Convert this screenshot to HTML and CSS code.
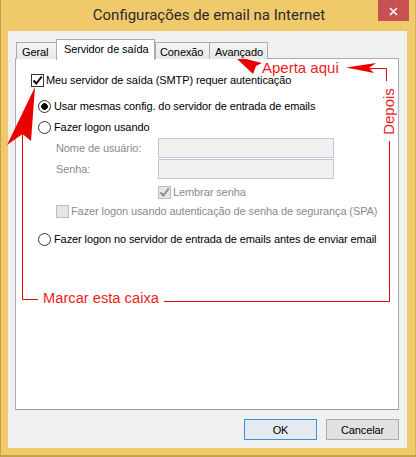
FILE: index.html
```html
<!DOCTYPE html>
<html lang="pt-BR">
<head>
<meta charset="utf-8">
<title>Configurações de email na Internet</title>
<link rel="stylesheet" href="styles.css">
</head>
<body>
<div class="window">
  <div class="titlebar">
    <span class="title">Configurações de email na Internet</span>
    <span class="close" aria-label="Fechar">
      <svg width="9" height="9" viewBox="0 0 9 9"><path d="M1 1 L8 8 M8 1 L1 8" stroke="#fff" stroke-width="1.6"/></svg>
    </span>
  </div>

  <div class="client">
    <div class="tabs">
      <span class="tab tab-geral">Geral</span>
      <span class="tab tab-active">Servidor de saída</span>
      <span class="tab tab-conexao">Conexão</span>
      <span class="tab tab-avancado">Avançado</span>
    </div>

    <div class="panel">
      <label class="row row-auth">
        <span class="check checked">
          <svg width="11" height="11" viewBox="0 0 11 11"><path d="M1.5 5.5 L4.3 8.5 L9.8 1.5" fill="none" stroke="#000" stroke-width="2"/></svg>
        </span>
        <span class="txt">Meu servidor de saída (SMTP) requer autenticação</span>
      </label>

      <label class="row row-same">
        <span class="radio selected"></span>
        <span class="txt">Usar mesmas config. do servidor de entrada de emails</span>
      </label>

      <label class="row row-logon">
        <span class="radio"></span>
        <span class="txt">Fazer logon usando</span>
      </label>

      <div class="field field-user">
        <span class="lbl">Nome de usuário:</span>
        <span class="input"></span>
      </div>
      <div class="field field-pass">
        <span class="lbl">Senha:</span>
        <span class="input"></span>
      </div>

      <label class="row row-remember">
        <span class="check disabled">
          <svg width="11" height="11" viewBox="0 0 11 11"><path d="M1.5 5.5 L4.3 8.5 L9.8 1.5" fill="none" stroke="#8c8c8c" stroke-width="2"/></svg>
        </span>
        <span class="txt dim">Lembrar senha</span>
      </label>

      <label class="row row-spa">
        <span class="check disabled"></span>
        <span class="txt dim">Fazer logon usando autenticação de senha de segurança (SPA)</span>
      </label>

      <label class="row row-before">
        <span class="radio"></span>
        <span class="txt">Fazer logon no servidor de entrada de emails antes de enviar email</span>
      </label>
    </div>

    <div class="buttons">
      <span class="btn btn-default">OK</span>
      <span class="btn">Cancelar</span>
    </div>
  </div>

  <!-- red hand-drawn hints laid over the dialog -->
  <svg class="marks" width="416" height="457" viewBox="0 0 416 457">
    <g fill="#ea0000">
      <polygon points="35,87 31,141 22.5,134 7,145"/>
      <polygon points="234,56 262,63 256,66 253,74"/>
      <polygon points="346,67.5 376,63 369,68 374,73"/>
    </g>
    <g fill="none" stroke="#ea0000" stroke-width="1">
      <polyline points="22.5,134 22.5,299.5 38,299.5"/>
      <polyline points="164,301.5 389.5,301.5 389.5,141"/>
      <polyline points="369,68.5 386.5,68.5 386.5,81"/>
    </g>
  </svg>
  <span class="note note-aperta">Aperta aqui</span>
  <span class="note note-marcar">Marcar esta caixa</span>
  <span class="note note-depois">Depois</span>
</div>
</body>
</html>
```

FILE: styles.css
```css
* { box-sizing: border-box; }

html, body {
  margin: 0;
  padding: 0;
  background: #fff;
}

.window {
  position: relative;
  width: 416px;
  height: 457px;
  background: #f0c96b;
  box-shadow: inset 1px 0 0 #c9a04a, inset 0 -2px 0 #c9a04a, inset -1px 0 0 #d8b25c;
  font-family: "Liberation Sans", Arial, sans-serif;
  font-size: 11px;
  letter-spacing: -0.1px;
  color: #000;
  overflow: hidden;
}

/* title bar */
.titlebar {
  position: relative;
  height: 31px;
  display: flex;
  justify-content: center;
}

.title {
  font-family: Roboto, "Liberation Sans", sans-serif;
  font-size: 15px;
  letter-spacing: 0;
  line-height: 30px;
  color: #2b2b2b;
  padding-left: 2px;
}

.close {
  position: absolute;
  top: 0;
  right: 7px;
  width: 31px;
  height: 21px;
  background: #c75050;
  display: flex;
  align-items: center;
  justify-content: center;
  padding-top: 2px;
}

/* client area */
.client {
  margin: 0 9px 0 8px;
  height: 417px;
  background: #f0f0f0;
  padding: 7px 8px 0 7px;
}

.tabs {
  display: flex;
  align-items: flex-end;
  height: 21px;
  padding-left: 1px;
  position: relative;
  z-index: 1;
}

.tab {
  height: 17px;
  border: 1px solid #acacac;
  border-bottom: none;
  background: linear-gradient(#f4f4f4, #e8e8e8);
  padding: 3px 0 0 5px;
  line-height: 12px;
  color: #000;
  white-space: nowrap;
}

.tab + .tab { margin-left: -1px; }

.tab-geral { width: 41px; }
.tab-conexao { width: 55px; padding-left: 4px; }
.tab-avancado { width: 59px; padding-left: 5px; }

.tab-active {
  width: 99px;
  height: 21px;
  background: #fff;
  margin-bottom: -1px;
  padding: 3px 0 0 7px;
  position: relative;
  z-index: 2;
}

.tab-active + .tab { margin-left: 0; }

.panel {
  height: 352px;
  width: 384px;
  margin-top: -1px;
  border: 1px solid #acacac;
  border-bottom-color: #9a9a9a;
  background: #fff;
  padding: 15px 0 0 15px;
  display: flex;
  flex-direction: column;
  align-items: flex-start;
}

.row {
  display: flex;
  align-items: center;
  height: 13px;
  line-height: 13px;
  white-space: nowrap;
}

.row-same { margin: 13px 0 0 7px; }
.row-logon { margin: 8px 0 0 7px; }
.row-remember { margin: 7px 0 0 127px; }
.row-spa { margin: 6px 0 0 25px; }
.row-before { margin: 15px 0 0 7px; }

.txt { margin-left: 2px; }
.radio + .txt { margin-left: 3px; }
.dim { color: #8a8a8a; }

.check {
  width: 13px;
  height: 13px;
  border: 1px solid #333;
  background: #fff;
  display: flex;
  align-items: center;
  justify-content: center;
  flex: none;
}

.check.disabled {
  border-color: #bcbcbc;
  background: #e6e6e6;
}

.radio {
  width: 13px;
  height: 13px;
  border: 1px solid #333;
  border-radius: 50%;
  background: #fff;
  flex: none;
}

.radio.selected {
  background: radial-gradient(circle, #000 0, #000 3px, #fff 3.6px);
}

.field {
  display: flex;
  align-items: center;
  height: 20px;
  margin-left: 25px;
}

.field-user { margin-top: 4px; }
.field-pass { margin-top: 1px; }

.lbl {
  width: 102px;
  color: #8a8a8a;
}

.input {
  width: 176px;
  height: 20px;
  border: 1px solid #bfcad8;
  background: #f0f0f0;
}

/* dialog buttons */
.buttons {
  display: flex;
  justify-content: flex-end;
  gap: 9px;
  margin-top: 9px;
}

.btn {
  width: 73px;
  height: 21px;
  border: 1px solid #acacac;
  background: #e1e1e1;
  display: flex;
  align-items: center;
  justify-content: center;
  color: #000;
}

.btn-default {
  border-color: #3c8fdc;
  background: #e5eaf0;
}

/* red hints */
.marks {
  position: absolute;
  left: 0;
  top: 0;
  pointer-events: none;
}

.note {
  position: absolute;
  font-family: "Liberation Sans", sans-serif;
  font-size: 15px;
  letter-spacing: 0;
  line-height: 15px;
  color: #ee1c1c;
  white-space: nowrap;
}

.note-aperta { left: 262px; top: 60px; }
.note-marcar { left: 43px; top: 291px; font-size: 14.7px; }

.note-depois {
  left: 365px;
  top: 104px;
  transform: rotate(-90deg);
}
```
